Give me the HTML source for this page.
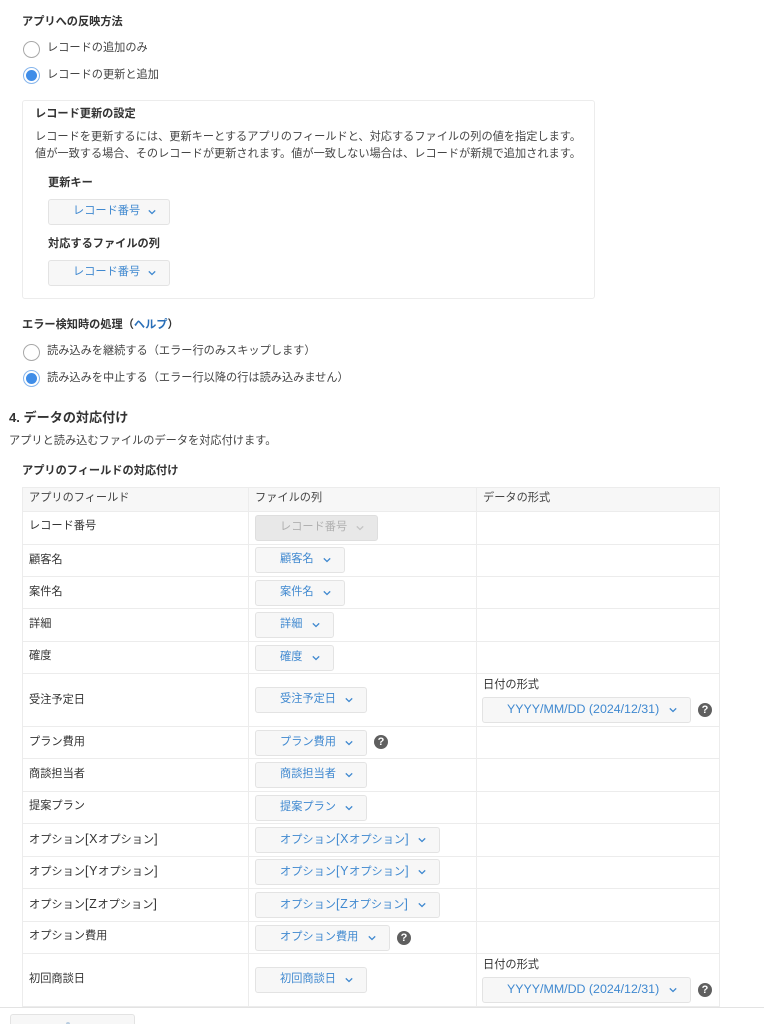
<!DOCTYPE html>
<html lang="ja"><head><meta charset="utf-8"><style>
html,body{margin:0;padding:0;background:#fff}
#p{position:relative;width:764px;height:1024px;overflow:hidden;font-family:"Liberation Sans","Noto Sans CJK JP",sans-serif;font-size:11.2px;color:#333;filter:blur(.25px)}
.t{position:absolute;white-space:nowrap;line-height:16px;height:16px}
.b{font-weight:700}
.g{color:#444}
.l{font-size:12.5px;letter-spacing:.7px}
.h{position:absolute;background:#ececec;height:1px;left:22px;width:698px}
.v{position:absolute;background:#ececec;width:1px;top:487px;height:520px}
.s{position:absolute;box-sizing:border-box;height:26px;background:#f7f7f7;border:1px solid #e3e3e3;border-radius:3px;color:#4089d0;line-height:23px;padding-left:24px;white-space:nowrap}
.s svg{position:absolute;right:12px;top:9px;width:10px;height:6px}
.s.d{background:#e8e8e8;border-color:#dedede;color:#b0b0b0}
.r{position:absolute;box-sizing:border-box;width:17px;height:17px;border-radius:50%;background:#fff;border:1px solid #a8a8a8}
.r.c{border:1px solid #86b5ec}
.r.c:after{content:"";position:absolute;left:2px;top:2px;width:11px;height:11px;border-radius:50%;background:#3f8de8}
.q{position:absolute;width:14px;height:14px;border-radius:50%;background:#5f5f5f;color:#fff;font:700 11px/14px "Liberation Sans",sans-serif;text-align:center}
</style></head><body><div id="p">
<div class="t b" style="left:22px;top:14px">アプリへの反映方法</div>
<div class="r" style="left:23px;top:41px"></div><div class="t g" style="left:47px;top:40px">レコードの追加のみ</div>
<div class="r c" style="left:23px;top:67px"></div><div class="t g" style="left:47px;top:67px">レコードの更新と追加</div>
<div style="position:absolute;left:22px;top:100px;width:573px;height:199px;box-sizing:border-box;border:1px solid #ececec;border-radius:3px"></div>
<div class="t b" style="left:35px;top:106px">レコード更新の設定</div>
<div class="t g" style="left:35px;top:129px">レコードを更新するには、更新キーとするアプリのフィールドと、対応するファイルの列の値を指定します。</div>
<div class="t g" style="left:35px;top:146px">値が一致する場合、そのレコードが更新されます。値が一致しない場合は、レコードが新規で追加されます。</div>
<div class="t b" style="left:48px;top:175px">更新キー</div>
<div class="s" style="left:48px;top:199px;width:122px">レコード番号<svg viewBox="0 0 10 6"><path d="M1.8 1.4 5 4.5 8.2 1.4" fill="none" stroke="#4089d0" stroke-width="1.3"/></svg></div>
<div class="t b" style="left:48px;top:236px">対応するファイルの列</div>
<div class="s" style="left:48px;top:260px;width:122px">レコード番号<svg viewBox="0 0 10 6"><path d="M1.8 1.4 5 4.5 8.2 1.4" fill="none" stroke="#4089d0" stroke-width="1.3"/></svg></div>
<div class="t b" style="left:22px;top:317px">エラー検知時の処理（<span style="color:#2a6fb8">ヘルプ</span>）</div>
<div class="r" style="left:23px;top:344px"></div><div class="t g" style="left:47px;top:343px">読み込みを継続する（エラー行のみスキップします）</div>
<div class="r c" style="left:23px;top:370px"></div><div class="t g" style="left:47px;top:370px">読み込みを中止する（エラー行以降の行は読み込みません）</div>
<div class="t b" style="left:9px;top:410px;font-size:13.1px">4. データの対応付け</div>
<div class="t g" style="left:9px;top:433px">アプリと読み込むファイルのデータを対応付けます。</div>
<div class="t b" style="left:22px;top:463px">アプリのフィールドの対応付け</div>

<div style="position:absolute;left:22px;top:487px;width:698px;height:24px;background:#f7f7f7"></div>
<div class="h" style="top:487px"></div><div class="h" style="top:511px"></div>
<div class="h" style="top:544px"></div><div class="h" style="top:576px"></div><div class="h" style="top:608px"></div>
<div class="h" style="top:641px"></div><div class="h" style="top:673px"></div><div class="h" style="top:726px"></div>
<div class="h" style="top:758px"></div><div class="h" style="top:791px"></div><div class="h" style="top:823px"></div>
<div class="h" style="top:856px"></div><div class="h" style="top:888px"></div><div class="h" style="top:921px"></div>
<div class="h" style="top:953px"></div><div class="h" style="top:1006px"></div>
<div class="v" style="left:22px"></div><div class="v" style="left:248px"></div><div class="v" style="left:476px"></div><div class="v" style="left:719px"></div>

<div class="t g" style="left:29px;top:490px">アプリのフィールド</div>
<div class="t g" style="left:255px;top:490px">ファイルの列</div>
<div class="t g" style="left:483px;top:490px">データの形式</div>

<div class="t" style="left:29px;top:518px">レコード番号</div>
<div class="t" style="left:29px;top:552px">顧客名</div>
<div class="t" style="left:29px;top:584px">案件名</div>
<div class="t" style="left:29px;top:616px">詳細</div>
<div class="t" style="left:29px;top:648px">確度</div>
<div class="t" style="left:29px;top:692px">受注予定日</div>
<div class="t" style="left:29px;top:734px">プラン費用</div>
<div class="t" style="left:29px;top:766px">商談担当者</div>
<div class="t" style="left:29px;top:798px">提案プラン</div>
<div class="t" style="left:29px;top:831px">オプション<span class="l">[X</span>オプション<span class="l">]</span></div>
<div class="t" style="left:29px;top:863px">オプション<span class="l">[Y</span>オプション<span class="l">]</span></div>
<div class="t" style="left:29px;top:896px">オプション<span class="l">[Z</span>オプション<span class="l">]</span></div>
<div class="t" style="left:29px;top:928px">オプション費用</div>
<div class="t" style="left:29px;top:971px">初回商談日</div>

<div class="s d" style="left:255px;top:515px;width:123px">レコード番号<svg viewBox="0 0 10 6"><path d="M1.8 1.4 5 4.5 8.2 1.4" fill="none" stroke="#c4c4c4" stroke-width="1.3"/></svg></div>
<div class="s" style="left:255px;top:547px;width:90px">顧客名<svg viewBox="0 0 10 6"><path d="M1.8 1.4 5 4.5 8.2 1.4" fill="none" stroke="#4089d0" stroke-width="1.3"/></svg></div>
<div class="s" style="left:255px;top:580px;width:90px">案件名<svg viewBox="0 0 10 6"><path d="M1.8 1.4 5 4.5 8.2 1.4" fill="none" stroke="#4089d0" stroke-width="1.3"/></svg></div>
<div class="s" style="left:255px;top:612px;width:79px">詳細<svg viewBox="0 0 10 6"><path d="M1.8 1.4 5 4.5 8.2 1.4" fill="none" stroke="#4089d0" stroke-width="1.3"/></svg></div>
<div class="s" style="left:255px;top:645px;width:79px">確度<svg viewBox="0 0 10 6"><path d="M1.8 1.4 5 4.5 8.2 1.4" fill="none" stroke="#4089d0" stroke-width="1.3"/></svg></div>
<div class="s" style="left:255px;top:687px;width:112px">受注予定日<svg viewBox="0 0 10 6"><path d="M1.8 1.4 5 4.5 8.2 1.4" fill="none" stroke="#4089d0" stroke-width="1.3"/></svg></div>
<div class="s" style="left:255px;top:730px;width:112px">プラン費用<svg viewBox="0 0 10 6"><path d="M1.8 1.4 5 4.5 8.2 1.4" fill="none" stroke="#4089d0" stroke-width="1.3"/></svg></div>
<div class="s" style="left:255px;top:762px;width:112px">商談担当者<svg viewBox="0 0 10 6"><path d="M1.8 1.4 5 4.5 8.2 1.4" fill="none" stroke="#4089d0" stroke-width="1.3"/></svg></div>
<div class="s" style="left:255px;top:795px;width:112px">提案プラン<svg viewBox="0 0 10 6"><path d="M1.8 1.4 5 4.5 8.2 1.4" fill="none" stroke="#4089d0" stroke-width="1.3"/></svg></div>
<div class="s" style="left:255px;top:827px;width:185px">オプション<span class="l">[X</span>オプション<span class="l">]</span><svg viewBox="0 0 10 6"><path d="M1.8 1.4 5 4.5 8.2 1.4" fill="none" stroke="#4089d0" stroke-width="1.3"/></svg></div>
<div class="s" style="left:255px;top:859px;width:185px">オプション<span class="l">[Y</span>オプション<span class="l">]</span><svg viewBox="0 0 10 6"><path d="M1.8 1.4 5 4.5 8.2 1.4" fill="none" stroke="#4089d0" stroke-width="1.3"/></svg></div>
<div class="s" style="left:255px;top:892px;width:185px">オプション<span class="l">[Z</span>オプション<span class="l">]</span><svg viewBox="0 0 10 6"><path d="M1.8 1.4 5 4.5 8.2 1.4" fill="none" stroke="#4089d0" stroke-width="1.3"/></svg></div>
<div class="s" style="left:255px;top:925px;width:135px">オプション費用<svg viewBox="0 0 10 6"><path d="M1.8 1.4 5 4.5 8.2 1.4" fill="none" stroke="#4089d0" stroke-width="1.3"/></svg></div>
<div class="s" style="left:255px;top:967px;width:112px">初回商談日<svg viewBox="0 0 10 6"><path d="M1.8 1.4 5 4.5 8.2 1.4" fill="none" stroke="#4089d0" stroke-width="1.3"/></svg></div>

<div class="t" style="left:483px;top:677px">日付の形式</div>
<div class="s" style="left:482px;top:697px;width:209px;font-size:12.4px">YYYY/MM/DD (2024/12/31)<svg viewBox="0 0 10 6"><path d="M1.8 1.4 5 4.5 8.2 1.4" fill="none" stroke="#4089d0" stroke-width="1.3"/></svg></div>
<div class="t" style="left:483px;top:957px">日付の形式</div>
<div class="s" style="left:482px;top:977px;width:209px;font-size:12.4px">YYYY/MM/DD (2024/12/31)<svg viewBox="0 0 10 6"><path d="M1.8 1.4 5 4.5 8.2 1.4" fill="none" stroke="#4089d0" stroke-width="1.3"/></svg></div>

<div class="q" style="left:698px;top:703px">?</div>
<div class="q" style="left:374px;top:735px">?</div>
<div class="q" style="left:397px;top:931px">?</div>
<div class="q" style="left:698px;top:983px">?</div>

<div style="position:absolute;left:0;top:1007px;width:764px;height:1px;background:#e3e3e3"></div>
<div style="position:absolute;left:10px;top:1014px;width:125px;height:30px;box-sizing:border-box;border:1px solid #e3e3e3;border-radius:3px;background:#f7f7f7"></div>
<div style="position:absolute;left:66px;top:1022px;width:4px;height:2px;background:#b9cde0;border-radius:2px 2px 0 0"></div>
</div></body></html>
